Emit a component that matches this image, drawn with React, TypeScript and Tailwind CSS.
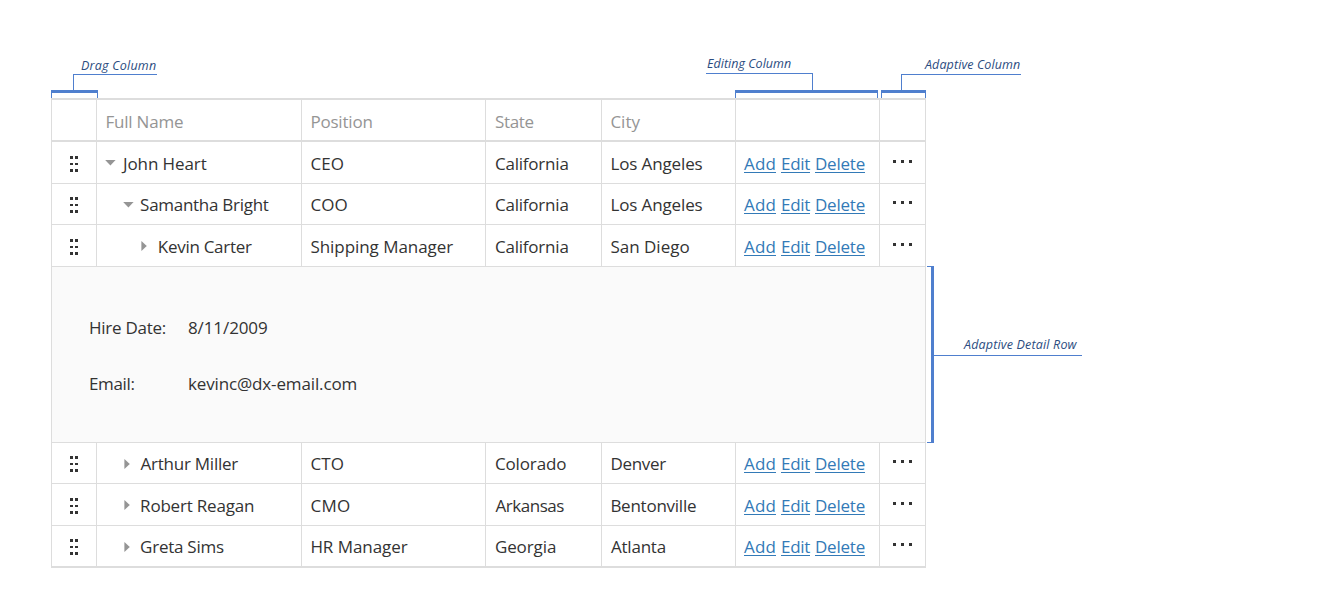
import type { ReactNode } from 'react';

type Label = { text: string; fit?: string };

type Employee = {
  name: Label;
  indent: string;
  expanded: boolean;
  position: Label;
  state: Label;
  city: Label;
  tall: boolean;
};

const managers: Employee[] = [
  {
    name: { text: 'John Heart', fit: 'pl-px tracking-[-0.1px]' },
    indent: 'pl-[8px]',
    expanded: true,
    position: { text: 'CEO', fit: 'tracking-[0.1px]' },
    state: { text: 'California', fit: 'pl-[0.5px] tracking-[-0.2px]' },
    city: { text: 'Los Angeles', fit: 'tracking-[-0.12px]' },
    tall: true,
  },
  {
    name: { text: 'Samantha Bright', fit: 'pl-[0.6px] tracking-[-0.28px]' },
    indent: 'pl-[25.5px]',
    expanded: true,
    position: { text: 'COO', fit: 'tracking-[0.1px]' },
    state: { text: 'California', fit: 'pl-[0.5px] tracking-[-0.2px]' },
    city: { text: 'Los Angeles', fit: 'tracking-[-0.12px]' },
    tall: false,
  },
  {
    name: { text: 'Kevin Carter', fit: 'pl-[0.8px] tracking-[-0.28px]' },
    indent: 'pl-[43px]',
    expanded: false,
    position: { text: 'Shipping Manager', fit: 'tracking-[-0.05px]' },
    state: { text: 'California', fit: 'pl-[0.5px] tracking-[-0.2px]' },
    city: { text: 'San Diego' },
    tall: true,
  },
];

const reports: Employee[] = [
  {
    name: { text: 'Arthur Miller', fit: 'pl-px tracking-[-0.24px]' },
    indent: 'pl-[25.5px]',
    expanded: false,
    position: { text: 'CTO', fit: 'tracking-[0.1px]' },
    state: { text: 'Colorado', fit: 'pl-[0.5px] tracking-[-0.12px]' },
    city: { text: 'Denver', fit: 'tracking-[-0.3px]' },
    tall: false,
  },
  {
    name: { text: 'Robert Reagan', fit: 'pl-[0.6px] tracking-[-0.2px]' },
    indent: 'pl-[25.5px]',
    expanded: false,
    position: { text: 'CMO', fit: 'tracking-[0.3px]' },
    state: { text: 'Arkansas', fit: 'pl-px tracking-[-0.45px]' },
    city: { text: 'Bentonville', fit: 'tracking-[-0.25px]' },
    tall: true,
  },
  {
    name: { text: 'Greta Sims', fit: 'pl-[0.6px] tracking-[-0.25px]' },
    indent: 'pl-[25.5px]',
    expanded: false,
    position: { text: 'HR Manager', fit: 'tracking-[-0.05px]' },
    state: { text: 'Georgia', fit: 'pl-[0.5px] tracking-[-0.1px]' },
    city: { text: 'Atlanta', fit: 'pl-[0.5px] tracking-[-0.2px]' },
    tall: false,
  },
];

const columns = 'grid grid-cols-[45px_205px_184px_116px_134px_144px_45px]';

function Cell({ children, className = '' }: { children?: ReactNode; className?: string }) {
  return <div className={`border-r border-[#ddd] last:border-r-0 ${className}`}>{children}</div>;
}

function TextCell({ label, tall }: { label: Label; tall: boolean }) {
  return (
    <Cell className={`pl-[8.4px] ${tall ? 'pt-px' : ''}`}>
      <span className={`block ${label.fit ?? ''}`}>{label.text}</span>
    </Cell>
  );
}

function DragHandle() {
  return (
    <div className="ml-[18px] mt-[13px] grid w-[9px] grid-cols-[3px_3px] gap-x-[2px] gap-y-[4px]">
      {[0, 1, 2, 3, 4, 5].map((dot) => (
        <span key={dot} className="h-[2.6px] w-[2.8px] bg-[#333]" />
      ))}
    </div>
  );
}

function Arrow({ expanded }: { expanded: boolean }) {
  return (
    <svg className="mt-[15px] block h-3 w-3 shrink-0" viewBox="0 0 12 12" fill="#959595">
      <path d={expanded ? 'M0.2 3H10.6L5.4 8.4Z' : 'M1.4 1V11L6.8 6Z'} />
    </svg>
  );
}

function Row({ employee }: { employee: Employee }) {
  const { tall } = employee;
  const shift = tall ? 'pt-px' : '';
  return (
    <div className={`${columns} border-b border-[#ddd] ${tall ? 'h-[42px]' : 'h-[41px]'}`}>
      <Cell className={shift}>
        <DragHandle />
      </Cell>
      <Cell className={`flex ${employee.indent}`}>
        <Arrow expanded={employee.expanded} />
        <span className={`ml-[5px] whitespace-nowrap ${shift}`}>
          <span className={`block ${employee.name.fit ?? ''}`}>{employee.name.text}</span>
        </span>
      </Cell>
      <TextCell label={employee.position} tall={tall} />
      <TextCell label={employee.state} tall={tall} />
      <TextCell label={employee.city} tall={tall} />
      <Cell className={`flex pl-[8px] text-[#337ab7] ${shift}`}>
        <Command width="w-[32px]" fit="tracking-[0.15px]">Add</Command>
        <Command width="ml-[5px] w-[29px]" fit="tracking-[-0.3px]">Edit</Command>
        <Command width="ml-[5px] w-[50px]" fit="tracking-[-0.22px]">Delete</Command>
      </Cell>
      <Cell className={shift}>
        <div className="ml-[13px] mt-[17px] flex gap-[5px]">
          <span className="h-[3px] w-[3px] bg-[#333]" />
          <span className="h-[3px] w-[3px] bg-[#333]" />
          <span className="h-[3px] w-[3px] bg-[#333]" />
        </div>
      </Cell>
    </div>
  );
}

function Command({ children, width, fit }: { children: string; width: string; fit: string }) {
  return (
    <a className={`block h-[30px] whitespace-nowrap border-b border-[#337ab7] ${width} ${fit}`}>
      {children}
    </a>
  );
}

const header: Label[] = [
  { text: 'Full Name', fit: 'tracking-[-0.2px]' },
  { text: 'Position', fit: 'tracking-[-0.2px]' },
  { text: 'State', fit: 'pl-[0.5px] tracking-[-0.3px]' },
  { text: 'City' },
];

const note = 'absolute whitespace-nowrap text-[12.5px] leading-[18px] italic text-[#2b4c80]';
const line = 'absolute bg-[#4f7fce]';
const bracket = 'absolute h-2 border-x border-t-[3px] border-[#4f7fce]';

function Annotations() {
  return (
    <>
      <span className={`${note} left-[81px] top-[57px] tracking-[0.22px]`}>Drag Column</span>
      <div className={`${line} left-[73px] top-[74px] h-px w-[84px]`} />
      <div className={`${line} left-[73px] top-[74px] h-[17px] w-px`} />
      <div className={`${bracket} left-[51px] top-[90px] w-[47px]`} />

      <span className={`${note} left-[707px] top-[55px] tracking-[0.02px]`}>Editing Column</span>
      <div className={`${line} left-[706px] top-[73px] h-px w-[107px]`} />
      <div className={`${line} left-[812px] top-[73px] h-[18px] w-px`} />
      <div className={`${bracket} left-[735px] top-[90px] w-[143px]`} />

      <span className={`${note} left-[925px] top-[56px] tracking-[0.1px]`}>Adaptive Column</span>
      <div className={`${line} left-[901px] top-[74px] h-px w-[120px]`} />
      <div className={`${line} left-[901px] top-[74px] h-[17px] w-px`} />
      <div className={`${bracket} left-[881px] top-[90px] w-[45px]`} />

      <span className={`${note} left-[964px] top-[336px] tracking-[0.17px]`}>Adaptive Detail Row</span>
      <div className={`${line} left-[934px] top-[355px] h-px w-[148px]`} />
      <div className="absolute left-[927px] top-[266px] h-[177px] w-[7px] border-y border-r-[3px] border-[#4f7fce]" />
    </>
  );
}

export default function App() {
  return (
    <div className="relative h-[605px] w-[1317px] overflow-hidden bg-white pl-[51px] pt-[98px] font-['Open_Sans','Noto_Sans',sans-serif] text-[17px] leading-[41px] text-[#333]">
      <div className="h-[470px] w-[875px] border-x border-b-2 border-t-2 border-[#ddd]">
        <div className={`${columns} h-[42px] border-b-2 border-[#ddd] text-[#959595]`}>
          <Cell />
          {header.map((label) => (
            <TextCell key={label.text} label={label} tall />
          ))}
          <Cell />
          <Cell />
        </div>
        {managers.map((employee) => (
          <Row key={employee.name.text} employee={employee} />
        ))}
        <div className="h-[176px] border-b border-[#ddd] bg-[#fafafa] pl-[37px] pt-[33px] leading-[56px]">
          <div className="flex h-[56px]">
            <span className="w-[99px] tracking-[-0.25px]">Hire Date:</span>
            <span className="tracking-[-0.1px]">8/11/2009</span>
          </div>
          <div className="flex h-[56px]">
            <span className="w-[99px] tracking-[-0.35px]">Email:</span>
            <span className="tracking-[-0.14px]">kevinc@dx-email.com</span>
          </div>
        </div>
        {reports.map((employee, index) => (
          <div key={employee.name.text} className={index === reports.length - 1 ? 'h-[40px] overflow-hidden' : ''}>
            <Row employee={employee} />
          </div>
        ))}
      </div>
      <Annotations />
    </div>
  );
}
